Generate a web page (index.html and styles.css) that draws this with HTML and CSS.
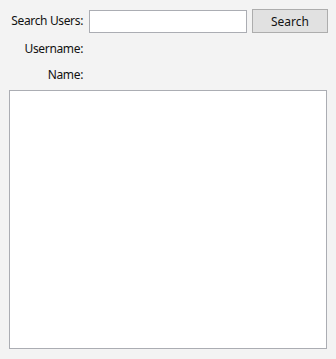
FILE: index.html
```html
<!DOCTYPE html>
<html lang="en">
<head>
  <meta charset="UTF-8">
  <title>Search Users</title>
  <link rel="stylesheet" href="styles.css">
</head>
<body>
  <div class="window">
    <div class="form">
      <label class="label" for="query">Search Users:</label>
      <input class="query" id="query" type="text">
      <button class="search-btn">Search</button>

      <span class="label">Username:</span>
      <span class="value" id="username"></span>

      <span class="label">Name:</span>
      <span class="value" id="name"></span>
    </div>
    <div class="results"></div>
  </div>
</body>
</html>
```

FILE: styles.css
```css
html, body { margin: 0; height: 100%; }
body { background: #f3f3f3; font-family: "Noto Sans", "Open Sans", sans-serif; font-size: 12px; color: #111; }

.window {
  padding: 9px 9px 10px 9px;
  box-sizing: border-box;
  height: 100%;
  display: flex;
  flex-direction: column;
}

.form {
  display: grid;
  grid-template-columns: 74px 158px 76px;
  grid-template-rows: 24px 32px 20px;
  column-gap: 6px;
  align-items: center;
  margin-bottom: 5px;
}

.label { text-align: right; line-height: 16px; white-space: nowrap; letter-spacing: -0.35px; }
.value { grid-column: 2 / 4; }

.query {
  box-sizing: border-box;
  height: 23px;
  margin: 1px 0 0 0;
  width: 158px;
  border: 1px solid #abadb3;
  background: #fff;
  padding: 0 3px;
  font: inherit;
  outline: none;
}

.search-btn {
  box-sizing: border-box;
  height: 24px;
  width: 76px;
  margin-left: -1px;
  border: 1px solid #adadad;
  background: #e1e1e1;
  font: inherit;
  color: #111;
  padding: 0;
}

.results {
  flex: 1;
  background: #fff;
  border: 1px solid #abadb3;
}
```
